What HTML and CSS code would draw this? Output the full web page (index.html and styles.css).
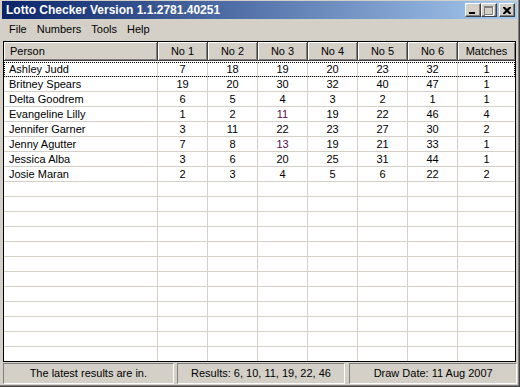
FILE: index.html
```html
<!DOCTYPE html>
<html>
<head>
<meta charset="utf-8">
<link rel="stylesheet" href="styles.css">
</head>
<body>
<div class="window">
  <div class="titlebar">
    <span class="title">Lotto Checker Version 1.1.2781.40251</span>
    <div class="tbuttons">
      <div class="tbtn"><span class="g-min"></span></div>
      <div class="tbtn"><span class="g-max"></span></div>
      <div class="tbtn close"><svg width="8" height="7" viewBox="0 0 8 7"><path d="M0 0h2l2 2 2-2h2v1l-2.5 2.5L8 6v1H6L4 5 2 7H0V6l2.5-2.5L0 1z" fill="#000"/></svg></div>
    </div>
  </div>
  <div class="menubar">
    <span class="mi">File</span><span class="mi">Numbers</span><span class="mi">Tools</span><span class="mi">Help</span>
  </div>
  <div class="listview">
    <div class="row head">
      <div class="hc left">Person</div><div class="hc">No 1</div><div class="hc">No 2</div><div class="hc">No 3</div><div class="hc">No 4</div><div class="hc">No 5</div><div class="hc">No 6</div><div class="hc">Matches</div>
    </div>
    <div class="body">
      <div class="row focus"><div class="c left">Ashley Judd</div><div class="c">7</div><div class="c">18</div><div class="c">19</div><div class="c">20</div><div class="c">23</div><div class="c">32</div><div class="c">1</div></div>
      <div class="row"><div class="c left">Britney Spears</div><div class="c">19</div><div class="c">20</div><div class="c">30</div><div class="c">32</div><div class="c">40</div><div class="c">47</div><div class="c">1</div></div>
      <div class="row"><div class="c left">Delta Goodrem</div><div class="c">6</div><div class="c">5</div><div class="c">4</div><div class="c">3</div><div class="c">2</div><div class="c">1</div><div class="c">1</div></div>
      <div class="row"><div class="c left">Evangeline Lilly</div><div class="c">1</div><div class="c">2</div><div class="c purple">11</div><div class="c">19</div><div class="c">22</div><div class="c">46</div><div class="c">4</div></div>
      <div class="row"><div class="c left">Jennifer Garner</div><div class="c">3</div><div class="c">11</div><div class="c">22</div><div class="c">23</div><div class="c">27</div><div class="c">30</div><div class="c">2</div></div>
      <div class="row"><div class="c left">Jenny Agutter</div><div class="c">7</div><div class="c">8</div><div class="c purple">13</div><div class="c">19</div><div class="c">21</div><div class="c">33</div><div class="c">1</div></div>
      <div class="row"><div class="c left">Jessica Alba</div><div class="c">3</div><div class="c">6</div><div class="c">20</div><div class="c">25</div><div class="c">31</div><div class="c">44</div><div class="c">1</div></div>
      <div class="row"><div class="c left">Josie Maran</div><div class="c">2</div><div class="c">3</div><div class="c">4</div><div class="c">5</div><div class="c">6</div><div class="c">22</div><div class="c">2</div></div>
      <div class="row"><div class="c"></div><div class="c"></div><div class="c"></div><div class="c"></div><div class="c"></div><div class="c"></div><div class="c"></div><div class="c"></div></div>
      <div class="row"><div class="c"></div><div class="c"></div><div class="c"></div><div class="c"></div><div class="c"></div><div class="c"></div><div class="c"></div><div class="c"></div></div>
      <div class="row"><div class="c"></div><div class="c"></div><div class="c"></div><div class="c"></div><div class="c"></div><div class="c"></div><div class="c"></div><div class="c"></div></div>
      <div class="row"><div class="c"></div><div class="c"></div><div class="c"></div><div class="c"></div><div class="c"></div><div class="c"></div><div class="c"></div><div class="c"></div></div>
      <div class="row"><div class="c"></div><div class="c"></div><div class="c"></div><div class="c"></div><div class="c"></div><div class="c"></div><div class="c"></div><div class="c"></div></div>
      <div class="row"><div class="c"></div><div class="c"></div><div class="c"></div><div class="c"></div><div class="c"></div><div class="c"></div><div class="c"></div><div class="c"></div></div>
      <div class="row"><div class="c"></div><div class="c"></div><div class="c"></div><div class="c"></div><div class="c"></div><div class="c"></div><div class="c"></div><div class="c"></div></div>
      <div class="row"><div class="c"></div><div class="c"></div><div class="c"></div><div class="c"></div><div class="c"></div><div class="c"></div><div class="c"></div><div class="c"></div></div>
      <div class="row"><div class="c"></div><div class="c"></div><div class="c"></div><div class="c"></div><div class="c"></div><div class="c"></div><div class="c"></div><div class="c"></div></div>
      <div class="row"><div class="c"></div><div class="c"></div><div class="c"></div><div class="c"></div><div class="c"></div><div class="c"></div><div class="c"></div><div class="c"></div></div>
      <div class="row"><div class="c"></div><div class="c"></div><div class="c"></div><div class="c"></div><div class="c"></div><div class="c"></div><div class="c"></div><div class="c"></div></div>
      <div class="row"><div class="c"></div><div class="c"></div><div class="c"></div><div class="c"></div><div class="c"></div><div class="c"></div><div class="c"></div><div class="c"></div></div>
    </div>
  </div>
  <div class="statusbar">
    <div class="panel p1">The latest results are in.</div>
    <div class="panel p2">Results: 6, 10, 11, 19, 22, 46</div>
    <div class="panel p3">Draw Date: 11 Aug 2007</div>
  </div>
</div>
</body>
</html>
```

FILE: styles.css
```css
html, body {
  margin: 0;
  padding: 0;
  background: #d4d0c8;
}

.window {
  width: 520px;
  height: 387px;
  box-sizing: border-box;
  background: #d4d0c8;
  padding: 1px 2px 0 2px;
  border-right: 1px solid #404040;
  border-bottom: 1px solid #404040;
  box-shadow: inset -1px -1px 0 #808080;
  display: flex;
  flex-direction: column;
  font-family: "Liberation Sans", Arial, sans-serif;
  font-size: 11px;
  color: #000;
  overflow: hidden;
}

.titlebar {
  height: 18px;
  flex: none;
  background: linear-gradient(to right, #0a246a, #a6caf0);
  display: flex;
  align-items: center;
  justify-content: space-between;
  padding: 0 2px 0 4px;
}

.title {
  color: #fff;
  font-weight: bold;
  font-size: 12px;
  line-height: 18px;
}

.tbuttons {
  display: flex;
  align-items: center;
}

.tbtn {
  width: 16px;
  height: 14px;
  box-sizing: border-box;
  background: #d4d0c8;
  border-top: 1px solid #fff;
  border-left: 1px solid #fff;
  border-right: 1px solid #404040;
  border-bottom: 1px solid #404040;
  box-shadow: inset -1px -1px 0 #808080;
  display: flex;
  align-items: center;
  justify-content: center;
}

.tbtn.close {
  margin-left: 2px;
}

.g-min {
  display: block;
  width: 6px;
  height: 2px;
  background: #000;
  margin-top: 6px;
  margin-right: 2px;
}

.g-max {
  display: block;
  width: 9px;
  height: 9px;
  box-sizing: border-box;
  border: 1px solid #808080;
  border-top-width: 2px;
  box-shadow: 1px 1px 0 #fff;
  margin-right: 1px;
}

.tbtn.close svg {
  display: block;
  margin-right: 1px;
}

.menubar {
  height: 19px;
  flex: none;
  display: flex;
  align-items: center;
  padding-left: 2px;
  margin-top: 1px;
}

.mi {
  padding: 0 5px 0 5px;
  line-height: 17px;
}

.listview {
  flex: 1;
  margin: 2px 1px 0 1px;
  border: 1px solid #000;
  background: #fff;
  overflow: hidden;
}

.row {
  display: grid;
  grid-template-columns: 154px repeat(6, 50px) 58px;
}

.head {
  height: 19px;
  margin-bottom: 1px;
}

.hc {
  box-sizing: border-box;
  height: 19px;
  background: #d4d0c8;
  border-right: 1px solid #404040;
  border-bottom: 1px solid #404040;
  box-shadow: inset 1px 1px 0 #fff, inset -1px -1px 0 #808080;
  text-align: center;
  line-height: 18px;
}

.hc.left {
  text-align: left;
  padding-left: 6px;
}

.c {
  box-sizing: border-box;
  height: 15px;
  border-right: 1px solid #d4d0c8;
  border-bottom: 1px solid #d4d0c8;
  text-align: center;
  line-height: 14px;
  white-space: nowrap;
}

.c.left {
  text-align: left;
  padding-left: 5px;
}

.purple {
  color: #5a0a4a;
}

.focus {
  outline: 1px dotted #000;
  outline-offset: -1px;
}

.statusbar {
  height: 21px;
  flex: none;
  margin: 1px 0 2px 1px;
  display: flex;
  gap: 3px;
}

.panel {
  box-sizing: border-box;
  height: 21px;
  border-top: 1px solid #808080;
  border-left: 1px solid #808080;
  border-right: 1px solid #fff;
  border-bottom: 1px solid #fff;
  text-align: center;
  line-height: 19px;
  white-space: nowrap;
}

.p1 { width: 171px; }
.p2 { width: 169px; }
.p3 { width: 168px; margin-left: 1px; }
```
